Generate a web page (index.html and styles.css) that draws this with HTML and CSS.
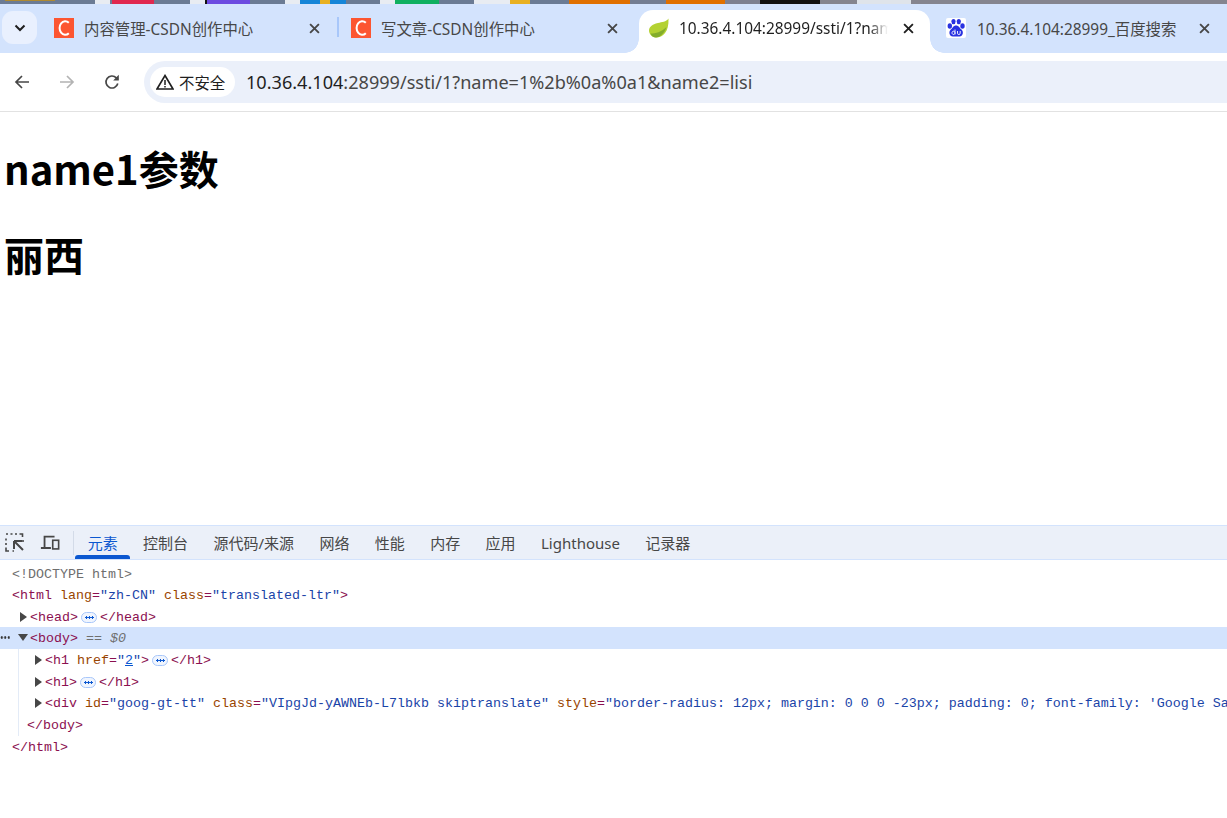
FILE: index.html
```html
<!DOCTYPE html>
<html lang="zh-CN">
<head>
<meta charset="utf-8">
<title>10.36.4.104:28999/ssti/1</title>
<link rel="stylesheet" href="styles.css">
</head>
<body>
<div class="desk"></div>
<div class="tabstrip">
  <button class="tabmenu" aria-label="tabs">
    <svg width="12" height="8" viewBox="0 0 12 8"><path d="M1.5 1.5 6 6l4.5-4.5" fill="none" stroke="#1f1f1f" stroke-width="2"/></svg>
  </button>
  <div class="tab t1">
    <svg class="fav" viewBox="0 0 20 20"><rect width="20" height="20" fill="#fc5531"/><path d="M14.800 4.800A5.600 6.800 0 1 0 14.800 15.200" fill="none" stroke="#fff" stroke-width="2"/></svg>
    <span class="tabtitle">内容管理-CSDN创作中心</span>
    <svg class="close" viewBox="0 0 10 10"><path d="M1 1l8 8M9 1l-8 8"/></svg>
  </div>
  <div class="sep"></div>
  <div class="tab t2">
    <svg class="fav" viewBox="0 0 20 20"><rect width="20" height="20" fill="#fc5531"/><path d="M14.800 4.800A5.600 6.800 0 1 0 14.800 15.200" fill="none" stroke="#fff" stroke-width="2"/></svg>
    <span class="tabtitle">写文章-CSDN创作中心</span>
    <svg class="close" viewBox="0 0 10 10"><path d="M1 1l8 8M9 1l-8 8"/></svg>
  </div>
  <div class="tab active">
    <svg class="fav" viewBox="0 0 20 20"><path d="M19.5.5C17 4 13 4 9 5 3 6.500 0 9 0 12.500 0 16 3 19.500 7 19.500 14 19.500 20 14 19.500.5z" fill="#b4d232"/><path d="M1.500 15.500C7 15.500 12 14 17.500 9 15.500 15 11 19.500 7 19.500 4.500 19.500 2.500 18 1.500 15.500z" fill="#83ad2c"/></svg>
    <span class="tabtitle fade">10.36.4.104:28999/ssti/1?name</span>
    <svg class="close dark" viewBox="0 0 10 10"><path d="M1 1l8 8M9 1l-8 8"/></svg>
  </div>
  <div class="tab t4">
    <svg class="fav" viewBox="0 0 20 20"><rect width="20" height="20" rx="2" fill="#fff"/><g fill="#2932e1"><ellipse cx="3.800" cy="8" rx="2.200" ry="2.800"/><ellipse cx="7.500" cy="3.600" rx="2.100" ry="2.700"/><ellipse cx="12.800" cy="3.600" rx="2.100" ry="2.700"/><ellipse cx="16.500" cy="8" rx="2.200" ry="2.800"/><path d="M10 7.500c2.800 0 3.500 2.500 5.500 4 2.500 2.200 1.500 7-2 7H6.800c-3.500 0-4.500-4.800-2-7 2-1.500 2.500-4 5.200-4z"/></g><path d="M9 11.500v5M9 14.800a1.500 1.700 0 1 0 0 .1M11.500 13v2.200a1.200 1.200 0 0 0 2.700 0V13" fill="none" stroke="#fff" stroke-width=".9"/></svg>
    <span class="tabtitle">10.36.4.104:28999_百度搜索</span>
    <svg class="close" viewBox="0 0 10 10"><path d="M1 1l8 8M9 1l-8 8"/></svg>
  </div>
</div>
<div class="toolbar">
  <svg class="nav" viewBox="0 0 16 16"><path d="M15 8H2M8 2 2 8l6 6" fill="none" stroke="#474747" stroke-width="1.700"/></svg>
  <svg class="nav" viewBox="0 0 16 16"><path d="M1 8h13M8 2l6 6-6 6" fill="none" stroke="#b3b3b3" stroke-width="1.700"/></svg>
  <svg class="nav" viewBox="0 0 16 16"><path d="M13.800 9.500A6 6 0 1 1 12.300 3.800L14 5.500" fill="none" stroke="#474747" stroke-width="1.700"/><path d="M14.800.8v5.700H9.200z" fill="#474747"/></svg>
  <div class="omnibox">
    <div class="chip">
      <svg class="warn" viewBox="0 0 18 16"><path d="M9 1.500 17 15H1z" fill="none" stroke="#1f1f1f" stroke-width="1.600"/><path d="M9 6v5M9 12v1.600" stroke="#1f1f1f" stroke-width="1.500"/></svg>
      <span>不安全</span>
    </div>
    <div class="url"><span class="host">10.36.4.104</span>:28999/ssti/1?name=1%2b%0a%0a1&amp;name2=lisi</div>
  </div>
</div>
<main class="page">
  <h1 class="head">name1参数</h1>
  <h1 class="head">丽西</h1>
</main>
<section class="devtools">
  <div class="dt-bar">
    <svg class="dt-icon first" viewBox="0 0 20 20"><path d="M1 1h2M5.500 1h2M10 1h2M14.500 1h3v3M1 5.500v2M1 10v2M1 14.500V18h3M7.500 18H9M18 7v2" fill="none" stroke="#474747" stroke-width="1.600"/><path d="M9 8h8M9 8v8M9 8l9 9" fill="none" stroke="#474747" stroke-width="2"/></svg>
    <svg class="dt-icon" viewBox="0 0 22 20"><path d="M16 3H5v12M1 15.500h11" fill="none" stroke="#474747" stroke-width="2"/><rect x="14" y="7" width="6.500" height="9.500" fill="none" stroke="#474747" stroke-width="1.800"/></svg>
    <div class="dt-sep"></div>
    <div class="dt-tab on">元素</div>
    <div class="dt-tab">控制台</div>
    <div class="dt-tab">源代码/来源</div>
    <div class="dt-tab">网络</div>
    <div class="dt-tab">性能</div>
    <div class="dt-tab">内存</div>
    <div class="dt-tab">应用</div>
    <div class="dt-tab">Lighthouse</div>
    <div class="dt-tab">记录器</div>
  </div>
  <div class="tree">
    <div class="row l0 doc">&lt;!DOCTYPE html&gt;</div>
    <div class="row l0"><span class="tg">&lt;html</span> <span class="an">lang</span><span class="tg">=</span><span class="av">"zh-CN"</span> <span class="an">class</span><span class="tg">=</span><span class="av">"translated-ltr"</span><span class="tg">&gt;</span></div>
    <div class="row l1"><i class="tri right"></i><span class="tg">&lt;head&gt;</span><i class="dots"></i><span class="tg">&lt;/head&gt;</span></div>
    <div class="row sel"><i class="more"></i><i class="tri down"></i><span class="tg">&lt;body&gt;</span> <em class="eq">== $0</em></div>
    <div class="nest">
      <div class="row l2"><i class="tri right"></i><span class="tg">&lt;h1</span> <span class="an">href</span><span class="tg">=</span><span class="av">"<u>2</u>"</span><span class="tg">&gt;</span><i class="dots"></i><span class="tg">&lt;/h1&gt;</span></div>
      <div class="row l2"><i class="tri right"></i><span class="tg">&lt;h1&gt;</span><i class="dots"></i><span class="tg">&lt;/h1&gt;</span></div>
      <div class="row l2"><i class="tri right"></i><span class="tg">&lt;div</span> <span class="an">id</span><span class="tg">=</span><span class="av">"goog-gt-tt"</span> <span class="an">class</span><span class="tg">=</span><span class="av">"VIpgJd-yAWNEb-L7lbkb skiptranslate"</span> <span class="an">style</span><span class="tg">=</span><span class="av">"border-radius: 12px; margin: 0 0 0 -23px; padding: 0; font-family: 'Google Sa</span></div>
      <div class="row l1b"><span class="tg">&lt;/body&gt;</span></div>
    </div>
    <div class="row l0"><span class="tg">&lt;/html&gt;</span></div>
  </div>
</section>
</body>
</html>
```
FILE: styles.css
```css
* { box-sizing: border-box; }
html, body { margin: 0; padding: 0; }
body {
  width: 1227px;
  height: 818px;
  overflow: hidden;
  background: #fff;
  display: flex;
  flex-direction: column;
  font-family: "Noto Sans", "Noto Sans CJK SC", sans-serif;
  color: #1f1f1f;
}

/* wallpaper sliver seen above the browser window */
.desk {
  height: 4px;
  flex: none;
  background:
    linear-gradient(90deg, transparent 5px, #b08a30 5px, #b08a30 55px, transparent 55px) 0 0 / 100% 1px no-repeat,
    linear-gradient(90deg,
      #6b7b94 95px, #e8ecf2 95px, #e8ecf2 110px, #6b7b94 110px, #6b7b94 112px,
      #e0284f 112px, #e0284f 154px, #6b7b94 154px, #6b7b94 190px,
      #e8ecf2 190px, #e8ecf2 205px, #111 205px, #111 207px,
      #6c4be0 207px, #6c4be0 250px, #6b7b94 250px, #6b7b94 285px,
      #e8ecf2 285px, #e8ecf2 300px, #1585d8 300px, #1585d8 320px,
      #e8b020 320px, #e8b020 330px, #1585d8 330px, #1585d8 346px,
      #6b7b94 346px, #6b7b94 380px, #e8ecf2 380px, #e8ecf2 395px,
      #10b060 395px, #10b060 439px, #6b7b94 439px, #6b7b94 474px,
      #e8ecf2 474px, #e8ecf2 510px, #e8b020 510px, #e8b020 530px,
      #6b7b94 530px, #6b7b94 569px, #e07000 569px, #e07000 630px,
      #737d92 630px, #737d92 666px, #e07000 666px, #e07000 725px,
      #7d8091 725px, #7d8091 760px, #111 760px, #111 820px,
      #85858f 820px, #85858f 857px, #dfe4ea 857px, #dfe4ea 911px,
      #85858f 911px);
}

/* tabs */
.tabstrip {
  height: 49px;
  flex: none;
  display: flex;
  align-items: flex-end;
  background: #d3e3fd;
  padding-left: 2px;
}
.tabmenu {
  width: 35px;
  height: 33px;
  margin: 0 0 9px;
  border: 0;
  border-radius: 11px;
  background: #e9f0fe;
  display: flex;
  align-items: center;
  justify-content: center;
  padding: 0;
  flex: none;
}
.tab {
  height: 43px;
  display: flex;
  align-items: center;
  flex: none;
  padding-bottom: 7px;
  font-size: 15.400px;
  color: #474747;
  position: relative;
}
.t1 { width: 300px; padding-left: 17px; }
.sep { width: 2px; height: 20px; background: #a8c7fa; margin-bottom: 16px; flex: none; }
.t2 { width: 300px; padding-left: 12px; }
.t2 .close { margin-right: 21px; }
.t4 { width: 297px; padding-left: 16px; }
.t4 .tabtitle { margin-left: 11px; }
.fav { width: 20px; height: 20px; flex: none; }
.tabtitle { margin-left: 10px; white-space: nowrap; overflow: hidden; flex: 1; }
.close { width: 11px; height: 11px; flex: none; margin-right: 17px; }
.close path { stroke: #474747; stroke-width: 1.700; fill: none; }
.close.dark path { stroke: #1f1f1f; }
.active {
  width: 291px;
  background: #fff;
  border-radius: 14px 14px 0 0;
  padding-left: 10px;
  color: #1f1f1f;
}
.active::before, .active::after {
  content: "";
  position: absolute;
  bottom: 0;
  width: 14px;
  height: 14px;
  background: radial-gradient(circle at var(--cx) 0, #d3e3fd 13.500px, #fff 14px);
}
.active::before { left: -14px; --cx: 0; }
.active::after { right: -14px; --cx: 100%; }
.active .tabtitle { flex: none; width: 209px; }
.active .close { margin-left: 15px; margin-right: 0; }
.fade {
  -webkit-mask-image: linear-gradient(to right, #000 190px, transparent 209px);
  mask-image: linear-gradient(to right, #000 190px, transparent 209px);
}

/* toolbar */
.toolbar {
  height: 59px;
  flex: none;
  display: flex;
  align-items: center;
  background: #fff;
  border-bottom: 1px solid #e2e2e2;
  padding-left: 14px;
}
.nav { width: 16px; height: 16px; flex: none; margin-right: 29px; }
.nav:nth-child(3) { margin-right: 24px; }
.omnibox {
  flex: 1;
  height: 42px;
  margin-right: -30px;
  background: #ebf0fa;
  border-radius: 21px;
  display: flex;
  align-items: center;
  padding-left: 6px;
}
.chip {
  height: 30px;
  width: 85px;
  background: #fff;
  border-radius: 15px;
  display: flex;
  align-items: center;
  padding-left: 6px;
  font-size: 15.400px;
  flex: none;
}
.warn { width: 18px; height: 16px; margin-right: 5px; flex: none; }
.url { margin-left: 11px; font-size: 18.100px; color: #474747; white-space: nowrap; }
.host { color: #1f1f1f; }

/* page */
.page { flex: 1; padding: 0 4px; min-height: 0; }
.head {
  font-family: "Noto Sans CJK SC", "Noto Sans", sans-serif;
  font-size: 40px;
  font-weight: 700;
  line-height: 58px;
  margin: 27px 0 0;
  color: #000;
}
.head + .head { margin-top: 28px; }

/* devtools */
.devtools { height: 293px; flex: none; display: flex; flex-direction: column; }
.dt-bar {
  height: 35px;
  flex: none;
  display: flex;
  align-items: center;
  background: #ebf0f9;
  border-top: 1px solid #d3e3fd;
  border-bottom: 1px solid #d3e3fd;
  padding-left: 5px;
  font-size: 15px;
  color: #474747;
}
.dt-icon { width: 20px; height: 20px; flex: none; margin-right: 13px; }
.dt-icon.first { margin-right: 15px; }
.dt-sep { width: 1px; height: 24px; background: #d3dbe8; flex: none; margin-right: 1px; }
.dt-tab {
  height: 100%;
  display: flex;
  align-items: center;
  padding: 0 12.700px;
  position: relative;
  white-space: nowrap;
}
.dt-tab.on { color: #0b57d0; }
.dt-tab.on::after {
  content: "";
  position: absolute;
  left: 0;
  right: 0;
  bottom: 0;
  height: 4px;
  background: #0b57d0;
  border-radius: 3px 3px 0 0;
}
.tree {
  flex: 1;
  padding-top: 2.500px;
  font-family: "Liberation Mono", monospace;
  font-size: 13.330px;
}
.row {
  height: 21.650px;
  line-height: 24px;
  white-space: pre;
  overflow: hidden;
  color: #8b1050;
  position: relative;
}
.l0 { padding-left: 12px; }
.l1 { padding-left: 20px; }
.nest { border-left: 1px solid #e3ebf7; margin-left: 18px; }
.nest .l2 { padding-left: 16px; }
.nest .l1b { padding-left: 8px; }
.doc { color: #6e6e6e; }
.tg { color: #8b1050; }
.an { color: #994500; }
.av { color: #1a44a8; }
.av u { color: #0b57d0; }
.sel { background: #d3e3fd; padding-left: 18px; }
.eq { color: #6e6e6e; font-style: italic; }
.more {
  position: absolute;
  left: 0;
  top: 9px;
  width: 10px;
  height: 3px;
  background: radial-gradient(circle, #333 1px, transparent 1.400px) 0 0 / 3.500px 3px repeat-x;
}
.tri { display: inline-block; width: 0; height: 0; }
.tri.right { border-left: 7px solid #474747; border-top: 5px solid transparent; border-bottom: 5px solid transparent; margin-right: 3px; vertical-align: -1px; }
.tri.down { border-top: 7px solid #474747; border-left: 5px solid transparent; border-right: 5px solid transparent; margin-right: 2px; vertical-align: 1px; }
.dots {
  display: inline-block;
  width: 16px;
  height: 11px;
  margin: 0 3px 0 3px;
  vertical-align: -2px;
  border: 1px solid #a8c7fa;
  border-radius: 6px;
  background:
    radial-gradient(circle, #0b57d0 1px, transparent 1.300px) 2.500px 50% / 3px 3px no-repeat,
    radial-gradient(circle, #0b57d0 1px, transparent 1.300px) 5.500px 50% / 3px 3px no-repeat,
    radial-gradient(circle, #0b57d0 1px, transparent 1.300px) 8.500px 50% / 3px 3px no-repeat,
    #f0f5fe;
}
```
